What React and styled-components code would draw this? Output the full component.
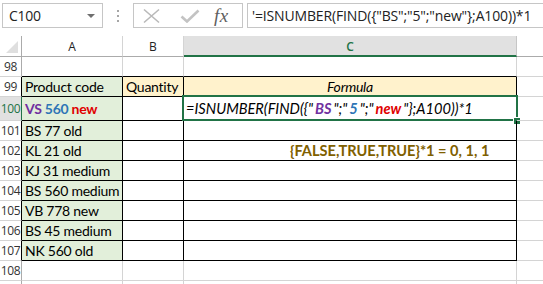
import React from 'react';
import styled, { createGlobalStyle } from 'styled-components';

const GlobalStyle = createGlobalStyle`
  html, body {
    margin: 0;
    padding: 0;
    background: #ffffff;
    overflow: hidden;
  }
  * { box-sizing: border-box; }
`;

const GREEN = '#217346';
const GRID = '#d4d4d4';
const HEAD_LINE = '#ababab';

const COLS = [
  { key: 'A', width: 101 },
  { key: 'B', width: 61 },
  { key: 'C', width: 333 },
  { key: 'D', width: 40 },
];

// Sheet data: rows 98..108 (109 is only a sliver at the bottom)
const ROWS = [
  { n: 98 },
  { n: 99, table: true, cells: { A: 'Product code', B: 'Quantity', C: 'Formula' }, header: true },
  { n: 100, table: true, tall: true, selected: true },
  { n: 101, table: true, cells: { A: 'BS 77 old' } },
  { n: 102, table: true, cells: { A: 'KL 21 old' }, result: true },
  { n: 103, table: true, cells: { A: 'KJ 31 medium' } },
  { n: 104, table: true, cells: { A: 'BS 560 medium' } },
  { n: 105, table: true, cells: { A: 'VB 778 new' } },
  { n: 106, table: true, cells: { A: 'BS 45 medium' } },
  { n: 107, table: true, cells: { A: 'NK 560 old' } },
  { n: 108 },
  { n: 109, hidden: true },
];

const App = () => {
  const tableRowAfter = (i) => ROWS[i + 1] && ROWS[i + 1].table;

  return (
    <>
      <GlobalStyle />
      <Page>
        <Toolbar>
          <NameBox>
            <span>C100</span>
            <DropArrow />
          </NameBox>
          <Grip>
            <i /><i /><i />
          </Grip>
          <ButtonBox>
            <svg width="20" height="16" viewBox="0 0 20 16">
              <path d="M2 1.5 L17 14.5 M17 1.5 L2 14.5" stroke="#b9b9b9" strokeWidth="1.6" fill="none" />
            </svg>
            <svg width="20" height="14" viewBox="0 0 20 14">
              <path d="M1.5 7.5 L7 12.5 L18.5 1.5" stroke="#c3c3c3" strokeWidth="2.6" fill="none" strokeLinejoin="miter" />
            </svg>
            <FxLabel>fx</FxLabel>
          </ButtonBox>
          <FormulaBox>{`'=ISNUMBER(FIND({"BS";"5";"new"};A100))*1`}</FormulaBox>
        </Toolbar>

        <Sheet>
          <HeaderRow>
            <Corner>
              <CornerTriangle />
            </Corner>
            {COLS.map((c) => (
              <ColHead key={c.key} $width={c.width} $active={c.key === 'C'}>
                {c.key !== 'D' ? c.key : ''}
              </ColHead>
            ))}
          </HeaderRow>

          {ROWS.map((row, i) => {
            const nextTable = tableRowAfter(i);
            return (
              <Row key={row.n} $tall={row.tall}>
                <RowHead $active={row.selected} $dark={row.table}>
                  {row.hidden ? '' : row.n}
                </RowHead>
                {COLS.map((c) => {
                  const inTable = c.key !== 'D';
                  const darkRight = row.table && inTable;
                  const darkBottom = inTable && (row.table || nextTable);
                  let bg = 'transparent';
                  if (row.table && c.key === 'A') bg = '#e2efda';
                  if (row.header && (c.key === 'B' || c.key === 'C')) bg = '#fff2cc';
                  return (
                    <Cell
                      key={c.key}
                      $width={c.width}
                      $bg={bg}
                      $darkRight={darkRight}
                      $darkBottom={darkBottom}
                      $center={row.header && c.key === 'C'}
                      $italic={row.header && c.key === 'C'}
                    >
                      {row.cells && row.cells[c.key]}
                      {row.selected && c.key === 'A' && (
                        <Bold>
                          <Tone $color="#7030a0">VS</Tone> <Tone $color="#2e75b6">560</Tone>{' '}
                          <Tone $color="#e00000">new</Tone>
                        </Bold>
                      )}
                      {row.selected && c.key === 'C' && (
                        <>
                          <FormulaText>
                            =ISNUMBER(FIND({'{'}"<Key $color="#7030a0">BS</Key>";"<Key $color="#2e75b6">5</Key>";"<Key $color="#e00000">new</Key>"{'}'};A100))*1
                          </FormulaText>
                          <SelectFrame />
                          <FillHandle />
                        </>
                      )}
                      {row.result && c.key === 'C' && <ResultText>{'{FALSE,TRUE,TRUE}*1 = 0, 1, 1'}</ResultText>}
                    </Cell>
                  );
                })}
              </Row>
            );
          })}
        </Sheet>
      </Page>
    </>
  );
};

const Page = styled.div`
  width: 543px;
  height: 284px;
  overflow: hidden;
  background: #fff;
`;

const Toolbar = styled.div`
  display: flex;
  align-items: flex-start;
  height: 36px;
  padding-top: 3px;
  padding-left: 2px;
  font-family: 'Open Sans', 'Liberation Sans', sans-serif;
`;

const NameBox = styled.div`
  width: 101px;
  height: 25px;
  border: 1px solid #c6c6c6;
  display: flex;
  align-items: center;
  justify-content: space-between;
  padding: 0 7px 0 6px;
  font-size: 14px;
  letter-spacing: -0.3px;
  color: #222;
`;

const DropArrow = styled.span`
  width: 0;
  height: 0;
  border-left: 4px solid transparent;
  border-right: 4px solid transparent;
  border-top: 4px solid #6f6f6f;
  margin-top: 1px;
`;

const Grip = styled.div`
  width: 30px;
  height: 25px;
  display: flex;
  flex-direction: column;
  align-items: center;
  justify-content: center;
  gap: 3px;

  i {
    display: block;
    width: 2px;
    height: 2px;
    background: #a6a6a6;
  }
`;

const ButtonBox = styled.div`
  width: 110px;
  height: 25px;
  border: 1px solid #c6c6c6;
  display: flex;
  align-items: center;
  padding-left: 8px;
  gap: 18px;
`;

const FxLabel = styled.span`
  font-family: 'Liberation Serif', 'DejaVu Serif', serif;
  font-style: italic;
  font-size: 19px;
  color: #5f5f5f;
  margin-left: -4px;
  letter-spacing: 0.5px;
`;

const FormulaBox = styled.div`
  flex: 1;
  margin-left: 4px;
  height: 25px;
  border: 1px solid #c6c6c6;
  border-right: none;
  display: flex;
  align-items: center;
  padding-left: 4px;
  font-size: 14px;
  letter-spacing: -0.15px;
  color: #222;
  white-space: nowrap;
  overflow: hidden;
`;

const Sheet = styled.div`
  display: flex;
  flex-direction: column;
  font-family: Lato, 'Liberation Sans', sans-serif;
`;

const HeaderRow = styled.div`
  display: flex;
  height: 21px;
  font-family: 'Open Sans', 'Liberation Sans', sans-serif;
  font-size: 12px;
`;

const Corner = styled.div`
  width: 22px;
  flex: none;
  position: relative;
  border-right: 1px solid ${HEAD_LINE};
  border-bottom: 1px solid ${HEAD_LINE};
`;

const CornerTriangle = styled.span`
  position: absolute;
  right: 3px;
  bottom: 3px;
  width: 0;
  height: 0;
  border-left: 12px solid transparent;
  border-bottom: 12px solid #dfdfdf;
`;

const ColHead = styled.div`
  width: ${(p) => p.$width}px;
  flex: none;
  display: flex;
  align-items: center;
  justify-content: center;
  border-right: 1px solid ${(p) => (p.$active ? '#c6c6c6' : GRID)};
  border-bottom: ${(p) => (p.$active ? `2px solid ${GREEN}` : `1px solid ${HEAD_LINE}`)};
  background: ${(p) => (p.$active ? '#e1e1e1' : '#fff')};
  color: ${(p) => (p.$active ? GREEN : '#222')};
  font-weight: ${(p) => (p.$active ? 600 : 400)};
  padding-top: ${(p) => (p.$active ? 1 : 0)}px;
`;

const Row = styled.div`
  display: flex;
  height: ${(p) => (p.$tall ? 24 : 20)}px;
`;

const RowHead = styled.div`
  width: 22px;
  flex: none;
  display: flex;
  align-items: center;
  justify-content: center;
  font-family: 'Open Sans', 'Liberation Sans', sans-serif;
  font-size: 12px;
  letter-spacing: -0.4px;
  background: ${(p) => (p.$active ? '#e1e1e1' : '#fff')};
  color: ${(p) => (p.$active ? GREEN : '#333')};
  border-right: 1px solid ${(p) => (p.$active ? GREEN : p.$dark ? '#000' : HEAD_LINE)};
  border-bottom: 1px solid ${GRID};
`;

const Cell = styled.div`
  position: relative;
  width: ${(p) => p.$width}px;
  flex: none;
  display: flex;
  align-items: center;
  justify-content: ${(p) => (p.$center ? 'center' : 'flex-start')};
  padding-left: ${(p) => (p.$center ? 0 : 3)}px;
  background: ${(p) => p.$bg};
  border-right: 1px solid ${(p) => (p.$darkRight ? '#000' : GRID)};
  border-bottom: 1px solid ${(p) => (p.$darkBottom ? '#000' : GRID)};
  font-size: 14px;
  letter-spacing: -0.25px;
  font-style: ${(p) => (p.$italic ? 'italic' : 'normal')};
  color: #000;
  white-space: nowrap;
`;

const Bold = styled.span`
  font-weight: 700;
`;

const Tone = styled.span`
  color: ${(p) => p.$color};
`;

const FormulaText = styled.span`
  font-size: 14.6px;
  letter-spacing: 0;
  font-style: italic;
  margin-left: -1px;
`;

const Key = styled.span`
  color: ${(p) => p.$color};
  font-weight: 700;
  margin: 0 2px;
`;

const ResultText = styled.span`
  font-size: 14.6px;
  letter-spacing: 0;
  margin-left: 103px;
  font-weight: 700;
  color: #7f6000;
`;

const SelectFrame = styled.span`
  position: absolute;
  top: -2px;
  left: -2px;
  right: -2px;
  bottom: -1px;
  border: 2px solid ${GREEN};
  pointer-events: none;
`;

const FillHandle = styled.span`
  position: absolute;
  right: -4px;
  bottom: -4px;
  width: 6px;
  height: 6px;
  background: ${GREEN};
  outline: 1px solid #fff;
`;

export default App;
